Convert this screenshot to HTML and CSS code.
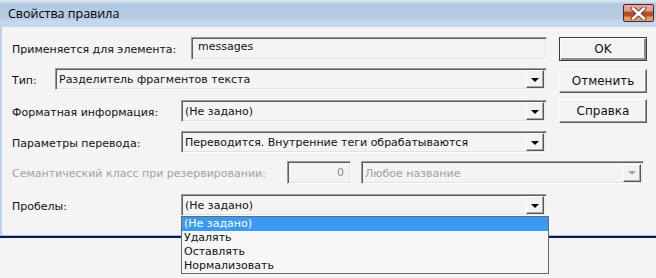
FILE: index.html
```html
<!DOCTYPE html>
<html lang="ru">
  <head>
    <meta charset="UTF-8" />
    <title>Свойства правила</title>
    <link rel="stylesheet" href="styles.css">
  </head>
  <body>
    <div class="window">
      <div class="titlebar">
        <span class="title">Свойства правила</span>
        <span class="close">
          <svg width="17" height="13" viewBox="0 0 17 13">
            <path d="M3 1.5 L14 11.5 M14 1.5 L3 11.5" stroke="#6a3a30" stroke-width="4.5" stroke-linecap="round" />
            <path d="M3 1.5 L14 11.5 M14 1.5 L3 11.5" stroke="#fff" stroke-width="2.6" stroke-linecap="round" />
          </svg>
        </span>
      </div>

      <div class="content">
        <div class="row">
          <label class="lbl w-element">Применяется для элемента:</label>
          <div class="field text">messages</div>
        </div>
        <button class="btn default">OK</button>

        <div class="row">
          <label class="lbl w-type">Тип:</label>
          <div class="field combo"><span class="value">Разделитель фрагментов текста</span><span class="arrow"></span></div>
        </div>
        <button class="btn">Отменить</button>

        <div class="row">
          <label class="lbl w-std">Форматная информация:</label>
          <div class="field combo"><span class="value">(Не задано)</span><span class="arrow"></span></div>
        </div>
        <button class="btn help">Справка</button>

        <div class="row">
          <label class="lbl w-std">Параметры перевода:</label>
          <div class="field combo"><span class="value">Переводится. Внутренние теги обрабатываются</span><span class="arrow"></span></div>
        </div>

        <div class="row wide disabled">
          <label class="lbl w-sem">Семантический класс при резервировании:</label>
          <div class="field number">0</div>
          <div class="field combo sem"><span class="value">Любое название</span><span class="arrow"></span></div>
        </div>

        <div class="row">
          <label class="lbl w-std">Пробелы:</label>
          <div class="field combo"><span class="value">(Не задано)</span><span class="arrow"></span></div>
        </div>
      </div>

      <ul class="dropdown">
        <li class="selected">(Не задано)</li>
        <li>Удалять</li>
        <li>Оставлять</li>
        <li>Нормализовать</li>
      </ul>
    </div>
  </body>
</html>
```

FILE: styles.css
```css
body {
  margin: 0;
  min-height: 278px;
  background-color: #f4f4f4;
  font-family: "DejaVu Sans", Tahoma, sans-serif;
  font-size: 11px;
  color: #111;
}

.window {
  position: relative;
  width: 656px;
  border-bottom: 2px solid #0c1650;
}

.titlebar {
  height: 27px;
  box-sizing: border-box;
  display: flex;
  align-items: flex-start;
  justify-content: space-between;
  padding: 4px 2px 0 8px;
  background: linear-gradient(#d8e2ec 0, #d8e2ec 2px, #b3c9e1 3px, #b7cde4 19px, #c3d8ee 20px, #c3d8ee 27px);
}

.title {
  font-family: "Open Sans", sans-serif;
  font-size: 12.5px;
  line-height: 19px;
  color: #000;
}

.close {
  width: 31px;
  height: 18px;
  box-sizing: border-box;
  border: 1px solid #4a2a30;
  border-radius: 2px;
  display: flex;
  align-items: center;
  justify-content: center;
  background: linear-gradient(#eaa89a 0, #e39a88 6px, #b4501f 7px, #b4501f 11px, #e8955f 12px, #eea070 18px);
}

.content {
  height: 209px;
  box-sizing: border-box;
  border-left: 2px solid #bcd2ec;
  border-bottom: 1px solid #9dbfe3;
  padding: 10px 0 0 10px;
  display: grid;
  grid-template-columns: 535px 88px;
  grid-template-rows: 31px 32px 31px 30px 33px 22px;
  column-gap: 12px;
  align-items: start;
}

.row {
  display: flex;
  align-items: center;
  height: 22px;
}

.row.wide {
  grid-column: 1 / -1;
  height: 23px;
}

.lbl {
  flex: none;
  padding-top: 2px;
}

.w-element { width: 179px; }
.w-type { width: 43px; }
.w-std { width: 169px; }
.w-sem { width: 275px; }

.disabled .lbl {
  color: #a2a2a2;
}

.field {
  box-sizing: border-box;
  height: 22px;
  background-color: #f4f4f4;
  border: 1px solid;
  border-color: #9a9a9a #fff #fff #9a9a9a;
  box-shadow: inset 1px 1px #5e5e5e, inset -1px -1px #e2e2e2;
  display: flex;
  align-items: center;
  white-space: nowrap;
}

.text {
  flex: 1;
  height: 23px;
  padding-left: 6px;
  padding-bottom: 3px;
}

.combo {
  flex: 1;
  padding: 0 2px 0 3px;
}

.combo .value {
  flex: 1;
  padding-top: 1px;
}

.arrow {
  width: 18px;
  height: 18px;
  box-sizing: border-box;
  border: 1px solid;
  border-color: #fff #555 #555 #fff;
  box-shadow: inset -1px -1px #a8a8a8;
  background-color: #f2f2f2;
  display: flex;
  align-items: center;
  justify-content: center;
}

.arrow::after {
  content: "";
  border-left: 4px solid transparent;
  border-right: 4px solid transparent;
  border-top: 4px solid #000;
  margin-top: 1px;
}

.number {
  width: 64px;
  height: 23px;
  justify-content: flex-end;
  padding-right: 6px;
  color: #8a8a6a;
}

.combo.sem {
  flex: none;
  width: 283px;
  height: 23px;
  margin-left: 10px;
  color: #a2a2a2;
}

.combo.sem .arrow::after {
  border-top-color: #a8a8a8;
}

.btn {
  margin-top: 1px;
  height: 24px;
  width: 88px;
  font-family: inherit;
  font-size: 12px;
  color: #111;
  background-color: #f4f4f4;
  border: 1px solid;
  border-color: #fff #5a5a5a #5a5a5a #fff;
  box-shadow: inset -1px -1px #9c9c9c;
  padding: 0;
}

.btn.default {
  margin-top: 0;
  border: 1px solid #3c3c3c;
  box-shadow: inset 1px 1px #fff, inset -2px -2px #8c8c8c;
}

.btn.help {
  margin-top: -1px;
}

.dropdown {
  position: absolute;
  left: 181px;
  top: 216px;
  width: 368px;
  margin: 0;
  padding: 0;
  list-style: none;
  box-sizing: border-box;
  border: 1px solid #6a6a72;
  background-color: #f6f6f6;
  z-index: 2;
}

.dropdown li {
  height: 14px;
  line-height: 14px;
  padding-left: 2px;
}

.dropdown li.selected {
  background-color: #3a9af2;
  color: #fff;
}
```
